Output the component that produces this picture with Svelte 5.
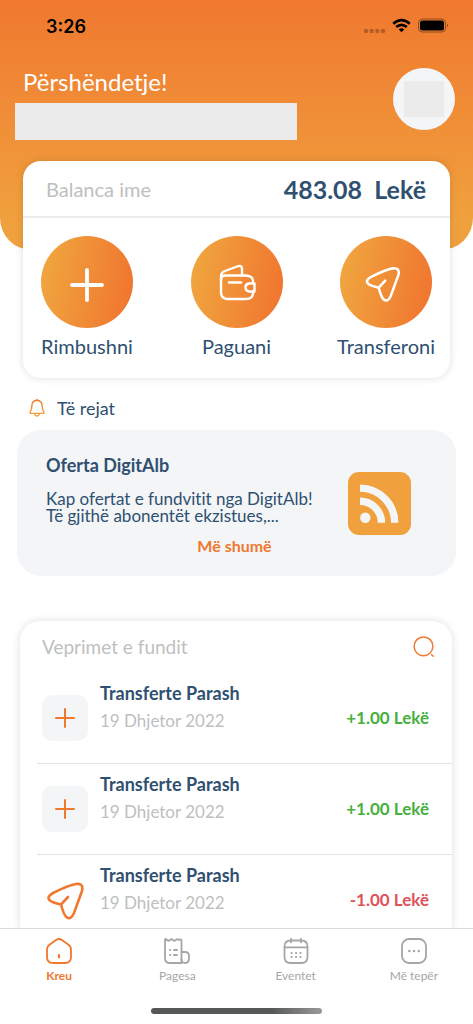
<script>
  const actions = [
    { label: 'Rimbushni', icon: 'plus' },
    { label: 'Paguani', icon: 'wallet' },
    { label: 'Transferoni', icon: 'send' }
  ];
  const operations = [
    { title: 'Transferte Parash', date: '19 Dhjetor 2022', amount: '+1.00 Lekë', incoming: true },
    { title: 'Transferte Parash', date: '19 Dhjetor 2022', amount: '+1.00 Lekë', incoming: true },
    { title: 'Transferte Parash', date: '19 Dhjetor 2022', amount: '-1.00 Lekë', incoming: false }
  ];
  const tabs = [
    { label: 'Kreu', icon: 'home', active: true },
    { label: 'Pagesa', icon: 'bill' },
    { label: 'Eventet', icon: 'calendar' },
    { label: 'Më tepër', icon: 'more' }
  ];
</script>

{#snippet sendShape(width)}
  <path
    d="M6 11 Q-1 15 3 18.500 Q5 20.500 14 22.500 Q17 34 20 35.500 Q24 38 27 31 L35 9 Q37 1 29 2 Q22 3 6 11 Z M14 22.500 L21 15"
    fill="none" stroke="currentColor" stroke-width={width} stroke-linecap="round" stroke-linejoin="round" />
{/snippet}

<div class="screen">
  <main>
    <header class="hero">
      <div class="status">
        <span class="time">3:26</span>
        <svg width="86" height="18" viewBox="0 0 86 18" aria-hidden="true">
          <g opacity=".25">
            <rect x="1" y="12" width="4" height="4" rx="1" /><rect x="6.700" y="12" width="4" height="4" rx="1" />
            <rect x="12.400" y="12" width="4" height="4" rx="1" /><rect x="18" y="12" width="4" height="4" rx="1" />
          </g>
          <g fill="none" stroke="#000" stroke-width="2.600">
            <path d="M30.200 6.800 Q38.500 -.400 46.800 6.800" />
            <path d="M33.200 10 Q38.500 5.600 43.800 10" />
          </g>
          <path d="M35.700 12.300 Q38.500 10 41.300 12.300 L38.500 15.300 Z" />
          <rect x="55.500" y="2" width="27" height="13" rx="4" fill="none" stroke="#000" stroke-opacity=".4" />
          <rect x="57" y="3.500" width="24" height="10" rx="2.500" />
          <path d="M84 6.500 Q86 8.500 84 10.500 Z" opacity=".45" />
        </svg>
      </div>
      <div class="greeting">
        <div class="who">
          <h1>Përshëndetje!</h1>
          <div class="name"></div>
        </div>
        <div class="avatar"><div class="photo"></div></div>
      </div>
    </header>

    <section class="balance card">
      <div class="balance-head">
        <span class="muted">Balanca ime</span>
        <strong>483.08&nbsp; Lekë</strong>
      </div>
      <div class="actions">
        {#each actions as action}
          <button class="action">
            <span class="disc">
              {#if action.icon === 'plus'}
                <svg width="92" height="92" viewBox="0 0 92 92"><path d="M46 34 V64 M31 49 H61" fill="none" stroke="#fff" stroke-width="3.800" stroke-linecap="round" /></svg>
              {:else if action.icon === 'wallet'}
                <svg width="92" height="92" viewBox="0 0 92 92" fill="none" stroke="#fff" stroke-width="2.400" stroke-linecap="round" stroke-linejoin="round">
                  <path d="M62 47 V45 Q62 40 55 39.500 H34 Q30 39.500 30 44 V56 Q30 63 37 63 H55 Q62 63 62 57 V56" />
                  <path d="M30 44 V40 Q30 36.500 34 35 L46 30.500 Q51 28.500 51 33 V39.500" />
                  <path d="M38 46.500 H50" />
                  <path d="M58 47.500 H63.500 V55.500 H58 Q54.500 55 54.500 51.500 Q54.500 48 58 47.500 Z" />
                </svg>
              {:else}
                <svg width="92" height="92" viewBox="0 0 92 92"><g transform="translate(25.500 30.500) scale(.94)">{@render sendShape(2.700)}</g></svg>
              {/if}
            </span>
            <span>{action.label}</span>
          </button>
        {/each}
      </div>
    </section>

    <h2 class="news">
      <svg width="16" height="18" viewBox="0 0 16 18" fill="none" stroke="url(#bell)" stroke-width="1.400" stroke-linejoin="round" aria-hidden="true">
        <defs><linearGradient id="bell" x1="0" y1="0" x2="0" y2="18" gradientUnits="userSpaceOnUse"><stop stop-color="#f07a30" /><stop offset="1" stop-color="#f0a540" /></linearGradient></defs>
        <path d="M8 1.300 Q3 1.500 2.800 7 Q2.800 10.500 1.600 12 Q.300 14.400 2 14.400 H14 Q15.700 14.400 14.400 12 Q13.200 10.500 13.200 7 Q13 1.500 8 1.300 Z M8 0 V1.500 M5.600 14.500 Q6 17 8 17 Q10 17 10.400 14.500" />
      </svg>
      Të rejat
    </h2>

    <section class="offer">
      <div class="offer-text">
        <h3>Oferta DigitAlb</h3>
        <p>Kap ofertat e fundvitit nga DigitAlb!<br />Të gjithë abonentët ekzistues,...</p>
      </div>
      <svg class="rss" width="63" height="63" viewBox="0 0 63 63" aria-hidden="true">
        <rect width="63" height="63" rx="11" fill="#f0a13d" />
        <circle cx="17.300" cy="45.700" r="5.200" fill="#f3f5f7" />
        <path d="M12 29.300 A21.500 21.500 0 0 1 33.500 50.800 M12 16.100 A34.700 34.700 0 0 1 46.700 50.800" fill="none" stroke="#f3f5f7" stroke-width="7.400" />
      </svg>
      <a class="more" href="#oferta">Më shumë</a>
    </section>

    <section class="operations card">
      <div class="operations-head">
        <h2 class="muted">Veprimet e fundit</h2>
        <button aria-label="Kërko">
          <svg width="22" height="22" viewBox="0 0 22 22" fill="none" stroke="#f07a32" stroke-width="1.500" stroke-linecap="round"><circle cx="10.500" cy="10.300" r="9.400" /><path d="M18.600 18.800 L20.300 20.300" /></svg>
        </button>
      </div>
      <ul>
        {#each operations as op}
          <li>
            <span class="kind" class:boxed={op.incoming}>
              {#if op.incoming}
                <svg width="46" height="46" viewBox="0 0 46 46"><path d="M23 14 V32 M14 23 H32" stroke="currentColor" stroke-width="2" stroke-linecap="round" /></svg>
              {:else}
                <svg width="46" height="46" viewBox="0 0 46 46"><g transform="translate(5 5)">{@render sendShape(2.600)}</g></svg>
              {/if}
            </span>
            <div class="detail">
              <span class="title">{op.title}</span>
              <span class="date muted">{op.date}</span>
            </div>
            <span class="amount" class:out={!op.incoming}>{op.amount}</span>
          </li>
        {/each}
      </ul>
    </section>
  </main>

  <nav>
    <div class="tabs">
      {#each tabs as tab}
        <a href="#{tab.icon}" class:active={tab.active}>
          <svg width="26" height="26" viewBox="0 0 26 26" fill="none" stroke="currentColor" stroke-width="1.800" stroke-linecap="round" stroke-linejoin="round" aria-hidden="true">
            {#if tab.icon === 'home'}
              <path d="M1 12 Q1 8.500 3.500 6.800 L10 2 Q13 0 16 2 L22.500 6.800 Q25 8.500 25 12 V19 Q25 25 19 25 H7 Q1 25 1 19 Z" />
              <path d="M13 17 V19.500" stroke-width="2.200" />
            {:else if tab.icon === 'bill'}
              <path d="M1 2 Q1 0 3 2 Q4.500 3.500 6 2 Q7.500 .200 9 2 Q10.500 3.500 12 2 Q13.500 .200 15 2 Q17.500 .200 17.500 3 V25 H6 Q1 25 1 20 Z" />
              <path d="M17.500 14 H21 Q25 14 25 18 V20 Q25 25 21 25 Q17.500 25 17.500 21" />
              <path d="M6 12 H6.300 M10 12 H13 M6 17 H6.300 M10 17 H13" stroke-width="1.900" />
            {:else if tab.icon === 'calendar'}
              <path d="M7.500 2.500 H18.500 Q24.500 2.500 24.500 8.500 V19 Q24.500 25 18.500 25 H7.500 Q1.500 25 1.500 19 V8.500 Q1.500 2.500 7.500 2.500 Z M1.500 9.300 H24.500 M8 .800 V4.300 M18 .800 V4.300" />
              <path d="M8.500 15 h.1 M13 15 h.1 M17.500 15 h.1 M8.500 19 h.1 M13 19 h.1 M17.500 19 h.1" stroke-width="2.200" />
            {:else}
              <rect x="1" y="1" width="24" height="24" rx="7" />
              <path d="M8.300 13 h.1 M13 13 h.1 M17.700 13 h.1" stroke-width="2.400" />
            {/if}
          </svg>
          <span>{tab.label}</span>
        </a>
      {/each}
    </div>
    <div class="indicator"></div>
  </nav>
</div>

<style>
  :global(body) { margin: 0; background: #fff; }
  .screen {
    height: 100vh;
    display: flex;
    flex-direction: column;
    overflow: hidden;
    background: #fff;
    color: #2f5070;
    font-family: Lato, sans-serif;
    font-size: 18px;
    font-variant-ligatures: none;
  }
  main { flex: 1; min-height: 0; overflow: hidden; }
  h1, h2, h3, p, ul { margin: 0; padding: 0; font-weight: 400; }
  button { border: 0; background: none; padding: 0; font: inherit; color: inherit; }
  a { text-decoration: none; color: inherit; }
  svg { display: block; flex: none; }
  .muted { color: #bebfc0; }
  .card { background: #fff; box-shadow: 0 0 8px rgba(0, 0, 0, .13); }

  .hero {
    background: linear-gradient(#f0782f, #f0a13e 88%);
    border-radius: 0 0 32px 32px;
    padding-bottom: 110px;
  }
  .status {
    display: flex;
    justify-content: space-between;
    align-items: center;
    height: 52px;
    padding: 0 24px 0 46px;
    color: #000;
  }
  .time { font: 600 18px Inter, sans-serif; }
  .greeting { display: flex; justify-content: space-between; padding: 16px 18px 0 15px; }
  .who { flex: 0 1 282px; }
  h1 { font-size: 24px; line-height: 28px; padding: 0 0 7px 8px; color: #fff; }
  .name { height: 37px; background: #ebebeb; }
  .avatar {
    width: 62px;
    height: 62px;
    border-radius: 50%;
    background: #f3f5f7;
    display: grid;
    place-items: center;
  }
  .photo { width: 40px; height: 36px; background: #ebebeb; }

  .balance { position: relative; margin: -89px 23px 0; border-radius: 18px; }
  .balance-head {
    display: flex;
    justify-content: space-between;
    align-items: center;
    height: 55px;
    padding: 0 24px 0 23px;
    border-bottom: 2px solid #ececec;
    font-size: 20px;
  }
  strong { font-size: 25px; font-weight: 700; }
  .actions {
    display: grid;
    grid-template-columns: repeat(3, 92px);
    justify-content: space-between;
    padding: 18px 18px 20px;
  }
  .action { display: flex; flex-direction: column; align-items: center; gap: 6px; font-size: 20px; line-height: 24px; }
  .disc { border-radius: 50%; background: linear-gradient(100deg, #f0a63f 5%, #f0752f 95%); color: #fff; }

  .news { display: flex; align-items: center; gap: 12px; padding: 19px 29px 11px; font-size: 18px; line-height: 22px; }

  .offer {
    display: grid;
    grid-template-columns: 1fr 63px;
    align-items: start;
    margin: 0 17px;
    padding: 24px 45px 19px 29px;
    border-radius: 24px;
    background: #f3f5f7;
  }
  .offer-text { white-space: nowrap; }
  h3 { font-size: 18px; line-height: 22px; font-weight: 700; }
  p { margin-top: 14px; font-size: 17px; line-height: 17px; }
  .rss { margin-top: 18px; }
  .more { grid-column: 1 / -1; justify-self: center; margin-left: 12px; color: #f0782f; font-size: 16px; line-height: 22px; font-weight: 700; }

  .operations { margin: 45px 21px 0 20px; border-radius: 20px; }
  .operations-head { display: flex; justify-content: space-between; align-items: center; height: 52px; padding: 0 17px 0 22px; }
  .operations-head h2 { font-size: 19px; line-height: 22px; }
  ul { list-style: none; margin-left: 17px; }
  li { display: flex; height: 90px; padding: 0 23px 0 5px; border-bottom: 1px solid #e3e3e3; }
  .kind { align-self: flex-start; margin: 22px 12px 0 0; border-radius: 10px; color: #f0782f; }
  .boxed { background: #f3f5f7; }
  .detail { display: flex; flex-direction: column; gap: 6px; flex: 1; padding-top: 9px; line-height: 22px; }
  .title { font-weight: 700; }
  .date { font-size: 17px; }
  .amount { margin-top: 34px; line-height: 22px; font-size: 17px; font-weight: 700; color: #45b03d; }
  .out { color: #e0525a; }

  nav { height: 95px; border-top: 1px solid #d9d9d9; background: #fff; }
  .tabs { display: grid; grid-template-columns: repeat(4, 1fr); padding-top: 9px; }
  .tabs a { display: flex; flex-direction: column; align-items: center; gap: 4px; color: #a5a6a7; font-size: 12px; line-height: 16px; }
  .tabs a.active { color: #f0782f; font-weight: 700; }
  .indicator { width: 36%; height: 6px; margin: 24px auto 0; border-radius: 3px; background: linear-gradient(90deg, #555856 70%, #999); }
</style>
